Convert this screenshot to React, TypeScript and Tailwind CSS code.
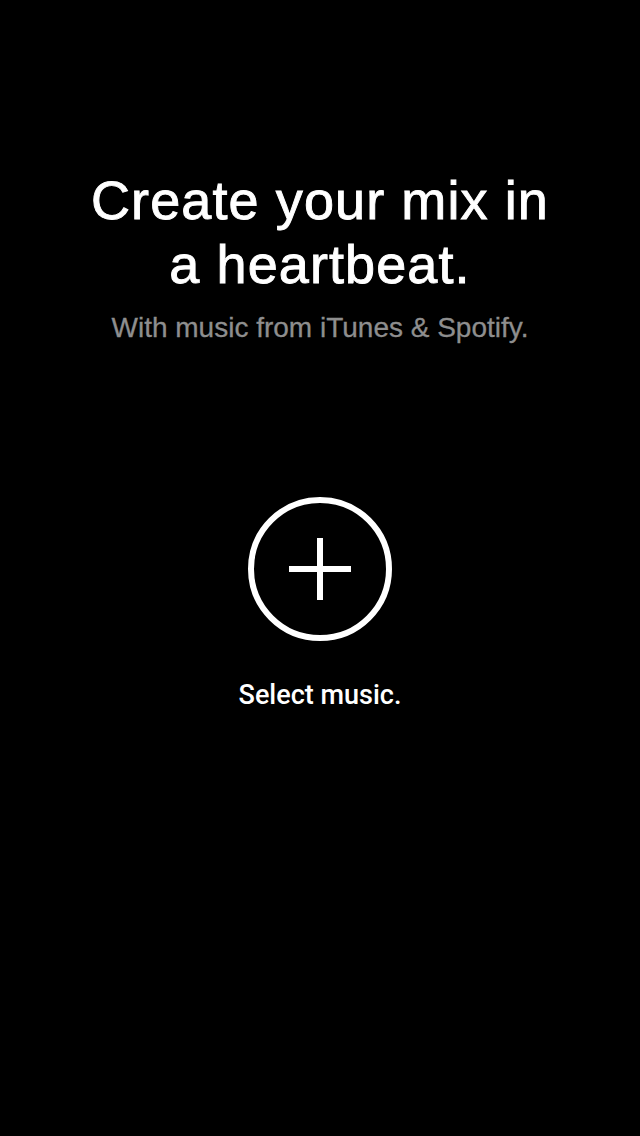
export default function App() {
  return (
    <div className="w-[640px] h-[1136px] bg-black flex flex-col items-center text-center font-['Liberation_Sans',Arial,sans-serif]">
      {/* Headline */}
      <h1 className="pt-[168px] text-white text-[54px] leading-[64px] tracking-[1.1px] [-webkit-text-stroke:0.9px_#fff]">
        Create your mix in
        <br />
        a heartbeat.
      </h1>
      <p className="mt-[15px] text-[#8e8e8e] text-[28px] leading-[34px] [-webkit-text-stroke:0.3px_#8e8e8e]">
        With music from iTunes &amp; Spotify.
      </p>

      {/* Add button */}
      <button className="mt-[152px] w-[144px] h-[144px] flex items-center justify-center">
        <svg viewBox="0 0 144 144" className="w-[144px] h-[144px]" xmlns="http://www.w3.org/2000/svg">
          <circle cx="72" cy="72" r="69" fill="none" stroke="#fff" strokeWidth="6" />
          <path d="M72 41 V103 M41 72 H103" stroke="#fff" strokeWidth="6" />
        </svg>
      </button>
      <p className="mt-[39px] text-white text-[27px] leading-[30px] font-medium font-['Roboto',sans-serif]">
        Select music.
      </p>
    </div>
  )
}
